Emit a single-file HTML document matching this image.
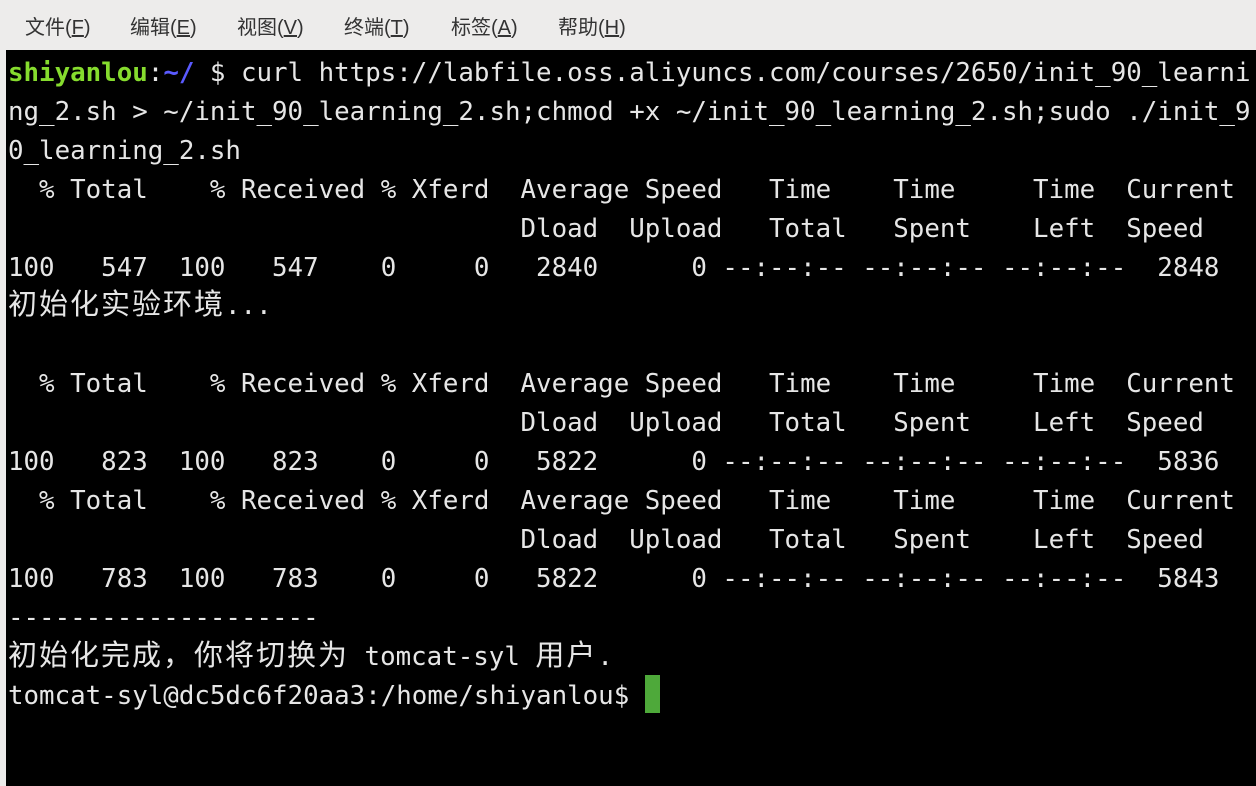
<!DOCTYPE html>
<html><head><meta charset="utf-8"><style>
html,body{margin:0;padding:0;width:1256px;height:786px;overflow:hidden;background:#edeceb;}
.menu{position:absolute;left:0;top:0;width:1256px;height:50px;background:#edeceb;font-family:"Liberation Sans","Noto Sans CJK SC",sans-serif;font-size:20px;color:#333;}
.menu span{position:absolute;top:11px;}
.term{position:absolute;left:6px;top:50px;width:1250px;height:736px;background:#000;}
pre{position:absolute;left:8px;top:54px;margin:0;font-family:"DejaVu Sans Mono","Liberation Mono","Noto Sans CJK SC",monospace;font-size:25.8px;line-height:38.9px;color:#e6e6e6;white-space:pre;}
.c{font-family:"Noto Sans CJK SC",sans-serif;letter-spacing:2px;font-size:29px;line-height:20px;}
.g{color:#86dc2e;font-weight:bold}
.b{color:#5a5aff;font-weight:bold}
.cur{position:absolute;left:645px;top:675px;width:15px;height:38px;background:#4ea93a;}
</style></head><body>
<div class="menu">
<span style="left:25px">文件(<u>F</u>)</span>
<span style="left:130px">编辑(<u>E</u>)</span>
<span style="left:237px">视图(<u>V</u>)</span>
<span style="left:344px">终端(<u>T</u>)</span>
<span style="left:451px">标签(<u>A</u>)</span>
<span style="left:558px">帮助(<u>H</u>)</span>
</div>
<div class="term"></div>
<pre><span class="g">shiyanlou</span>:<span class="b">~/</span> $ curl https://labfile.oss.aliyuncs.com/courses/2650/init_90_learni
ng_2.sh &gt; ~/init_90_learning_2.sh;chmod +x ~/init_90_learning_2.sh;sudo ./init_9
0_learning_2.sh
  % Total    % Received % Xferd  Average Speed   Time    Time     Time  Current
                                 Dload  Upload   Total   Spent    Left  Speed
100   547  100   547    0     0   2840      0 --:--:-- --:--:-- --:--:--  2848
<span class="c">初始化实验环境</span>...

  % Total    % Received % Xferd  Average Speed   Time    Time     Time  Current
                                 Dload  Upload   Total   Spent    Left  Speed
100   823  100   823    0     0   5822      0 --:--:-- --:--:-- --:--:--  5836
  % Total    % Received % Xferd  Average Speed   Time    Time     Time  Current
                                 Dload  Upload   Total   Spent    Left  Speed
100   783  100   783    0     0   5822      0 --:--:-- --:--:-- --:--:--  5843
--------------------
<span class="c">初始化完成，你将切换为</span> tomcat-syl <span class="c">用户</span>.
tomcat-syl@dc5dc6f20aa3:/home/shiyanlou$ </pre>
<div class="cur"></div>
</body></html>
